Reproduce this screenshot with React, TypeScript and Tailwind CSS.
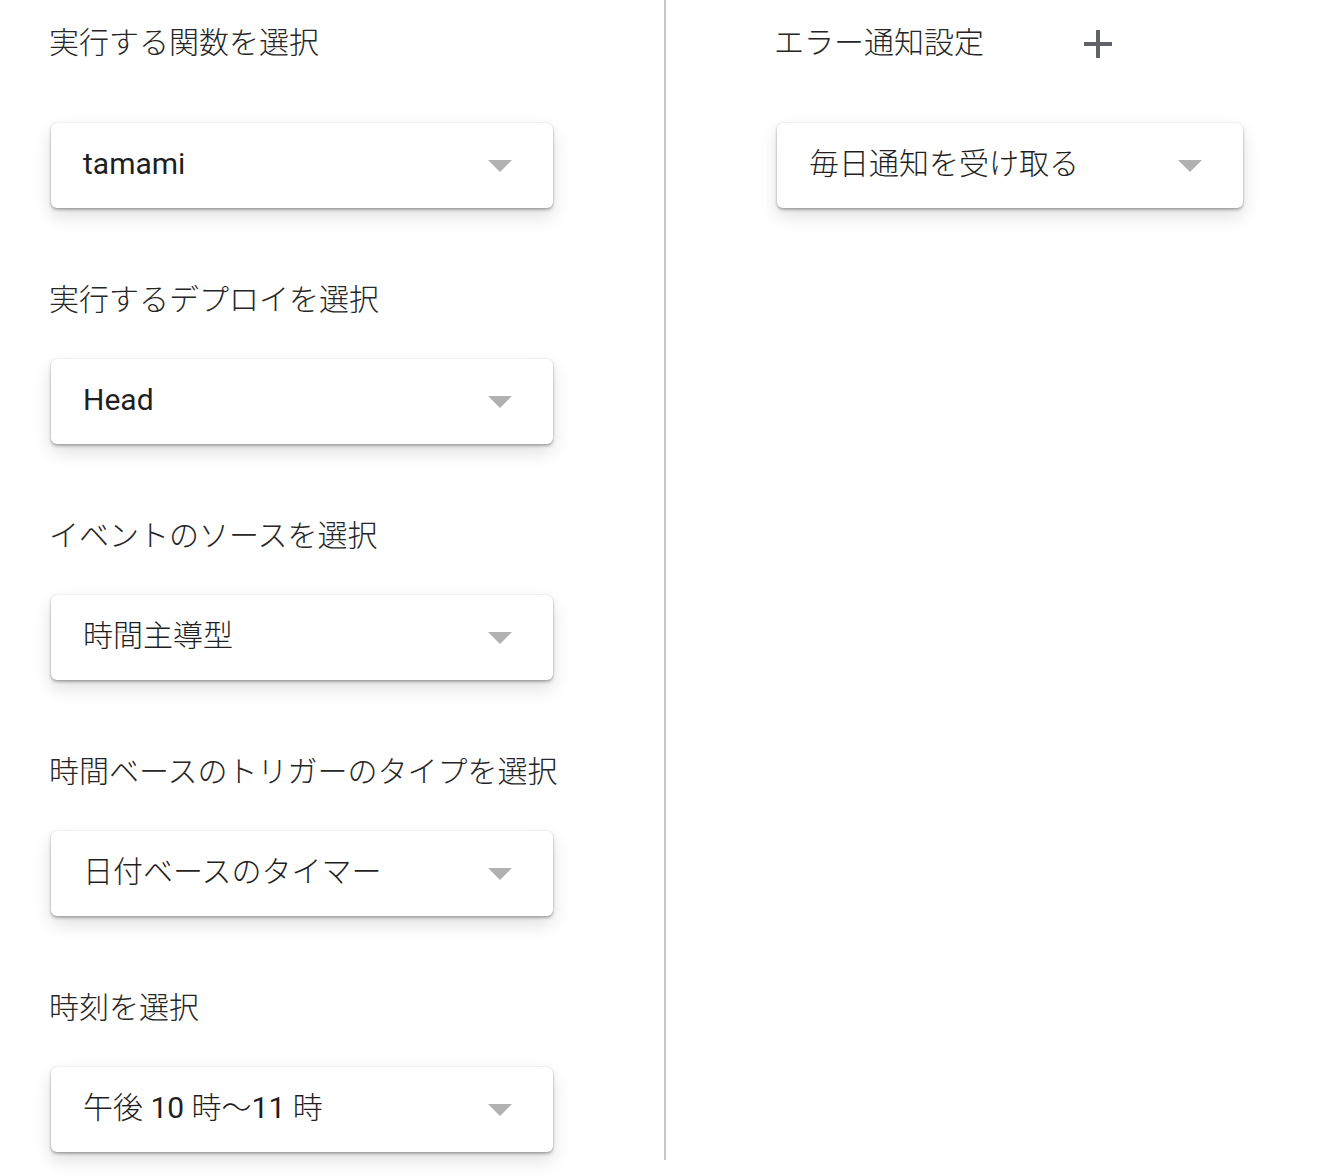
import React from 'react';

const FONT = { fontFamily: 'Roboto, "Noto Sans CJK JP", sans-serif' };

// Latin runs in regular weight, Japanese runs light (matches the reference's mix)
function Mixed({ text }: { text: string }) {
  const parts = text.match(/[\x20-\x7e]+|[^\x20-\x7e]+/g) ?? [];
  return (
    <>
      {parts.map((p, i) =>
        /^[\x20-\x7e]+$/.test(p) ? (
          <span key={i} className="font-normal">{p}</span>
        ) : (
          <span key={i} className="font-light">{p}</span>
        )
      )}
    </>
  );
}

function Arrow() {
  return (
    <svg width="24" height="12" viewBox="0 0 24 12" className="shrink-0">
      <path d="M0 0 L24 0 L12 12 Z" fill="#b1b1b1" />
    </svg>
  );
}

function Dropdown({ value, width }: { value: string; width: string }) {
  return (
    <div
      className={`${width} h-[85px] flex items-center justify-between pl-[32px] pr-[41px] bg-white rounded-[6px] shadow-[0_2px_3px_rgba(0,0,0,0.28),0_0_2px_rgba(0,0,0,0.14),0_8px_18px_rgba(0,0,0,0.13)]`}
    >
      <span className="text-[30px] leading-[40px] text-[#1f1f1f] -mt-[3px] whitespace-nowrap">
        <Mixed text={value} />
      </span>
      <Arrow />
    </div>
  );
}

function Label({ text }: { text: string }) {
  return (
    <div className="h-[40px] -ml-[2px] text-[30px] leading-[40px] font-light text-[#262626] whitespace-nowrap">
      {text}
    </div>
  );
}

const sections = [
  { label: '実行するデプロイを選択', value: 'Head' },
  { label: 'イベントのソースを選択', value: '時間主導型' },
  { label: '時間ベースのトリガーのタイプを選択', value: '日付ベースのタイマー' },
  { label: '時刻を選択', value: '午後 10 時〜11 時' },
];

export default function App() {
  return (
    <div className="bg-white w-[1342px] h-[1176px] overflow-hidden" style={FONT}>
      <div className="flex h-[1160px]">
        {/* left column */}
        <div className="w-[664px] shrink-0 pl-[51px] pt-[23px]">
          <Label text="実行する関数を選択" />
          <div className="mt-[60px]">
            <Dropdown value="tamami" width="w-[502px]" />
          </div>
          {sections.map(s => (
            <div key={s.label} className="mt-[72px]">
              <Label text={s.label} />
              <div className="mt-[39px]">
                <Dropdown value={s.value} width="w-[502px]" />
              </div>
            </div>
          ))}
        </div>

        <div className="w-[2px] shrink-0 bg-[#c4c7cb]" />

        {/* right column */}
        <div className="pl-[100px] pt-[23px]">
          <div className="flex items-center pl-[10px]">
            <Label text="エラー通知設定" />
            <svg width="30" height="30" viewBox="0 0 30 30" className="ml-[99px] mt-[2px]">
              <rect x="13" y="1" width="4" height="28" fill="#5f6368" />
              <rect x="1" y="13" width="28" height="4" fill="#5f6368" />
            </svg>
          </div>
          <div className="mt-[44px] overflow-hidden pl-[11px] pt-[16px] pb-[30px] pr-[30px] w-[537px]">
            <Dropdown value="毎日通知を受け取る" width="w-[466px]" />
          </div>
        </div>
      </div>
    </div>
  );
}
